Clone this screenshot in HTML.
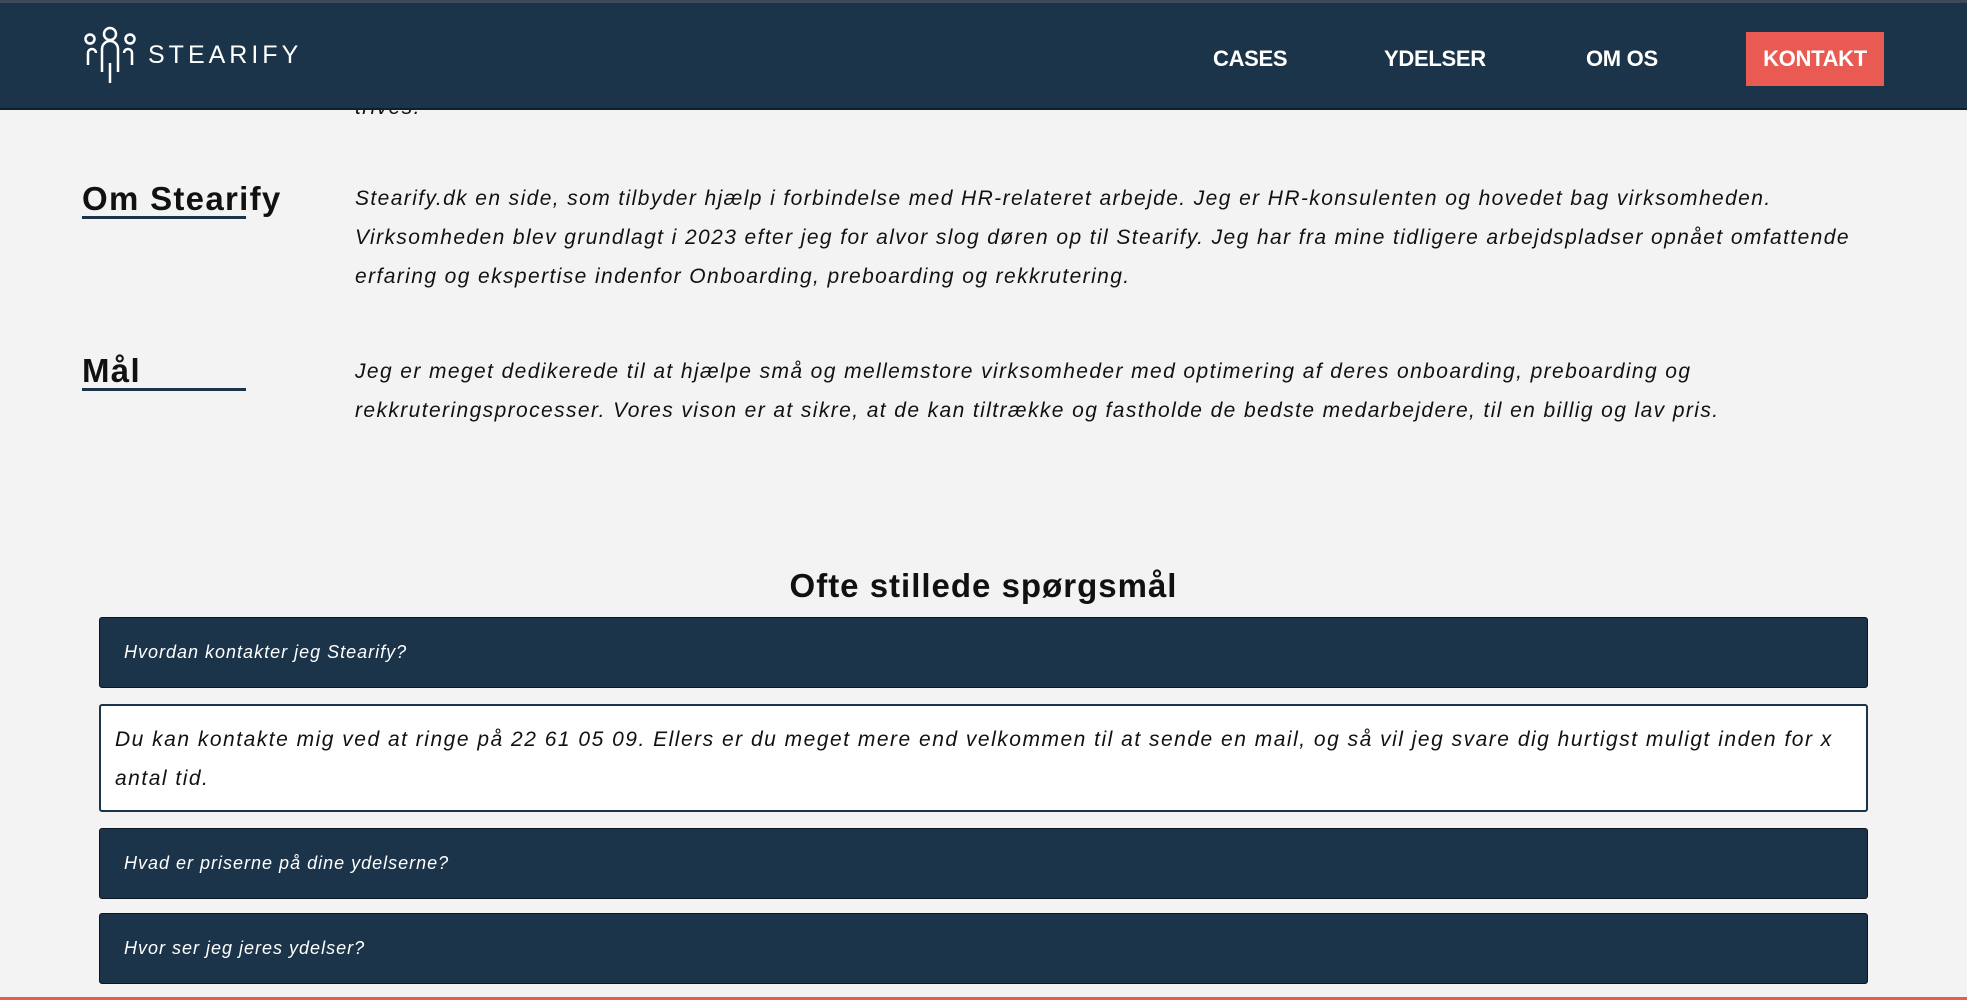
<!DOCTYPE html>
<html><head><meta charset="utf-8"><style>
*{margin:0;padding:0;box-sizing:border-box}
body{width:1967px;height:1000px;background:#f3f3f3;font-family:"Liberation Sans",sans-serif;position:relative;overflow:hidden;color:#111}
.hdr{position:absolute;left:0;top:0;width:1967px;height:110px;background:#1b3449;border-top:3px solid #3d4a5a;border-bottom:2px solid #0e1f2d;z-index:2}
.nav{position:absolute;top:43px;color:#fff;font-weight:bold;font-size:22px;letter-spacing:-0.3px}
.k{position:absolute;left:1746px;top:29px;width:138px;height:54px;background:#e85a52;color:#fff;font-weight:bold;font-size:22px;text-align:center;line-height:54px;letter-spacing:-0.3px}
.logo{position:absolute;left:148px;top:38px;color:#fff;font-size:25px;letter-spacing:4px;font-weight:normal}
.h{position:absolute;left:82px;font-weight:bold;font-size:33px;letter-spacing:1.3px}
.ul{position:absolute;left:82px;width:164px;height:3px;background:#1b3449}
.p{position:absolute;left:355px;font-style:italic;font-size:21px;line-height:39px;width:1600px;letter-spacing:1.4px}
.q{position:absolute;left:99px;width:1769px;height:71px;background:#1b3449;border:1px solid #0b1620;border-radius:3px;color:#fff;font-style:italic;font-size:18px;padding-left:24px;line-height:69px;letter-spacing:1px}
.a{position:absolute;left:99px;top:704px;width:1769px;height:108px;background:#fff;border:2px solid #1b3449;border-radius:3px;font-style:italic;font-size:21px;line-height:39px;padding:14px 14px 0 14px;letter-spacing:1.5px}
</style></head><body>
<div class="p" style="top:88px;left:355px">trives.</div>
<div class="hdr">
<svg style="position:absolute;left:80px;top:22px" width="60" height="60" viewBox="0 0 60 60" fill="none" stroke="#fff" stroke-width="2.5">
<circle cx="10" cy="14" r="4.5"/><circle cx="30" cy="9" r="6"/><circle cx="50" cy="14" r="4.5"/>
<path d="M8 40 V28 a4 4 0 0 1 8 0"/><path d="M52 40 V28 a4 4 0 0 0 -8 0"/>
<path d="M22 47 V24 a8 8 0 0 1 16 0 V47"/><path d="M30 38 V58"/>
</svg>
<div class="logo">STEARIFY</div>
<div class="nav" style="left:1213px">CASES</div>
<div class="nav" style="left:1384px">YDELSER</div>
<div class="nav" style="left:1586px">OM OS</div>
<div class="k">KONTAKT</div>
</div>
<div class="h" style="top:180px">Om Stearify</div>
<div class="ul" style="top:216px"></div>
<div class="p" style="top:179px">Stearify.dk en side, som tilbyder hjælp i forbindelse med HR-relateret arbejde. Jeg er HR-konsulenten og hovedet bag virksomheden.<br>Virksomheden blev grundlagt i 2023 efter jeg for alvor slog døren op til Stearify. Jeg har fra mine tidligere arbejdspladser opnået omfattende<br>erfaring og ekspertise indenfor Onboarding, preboarding og rekkrutering.</div>
<div class="h" style="top:352px">Mål</div>
<div class="ul" style="top:388px"></div>
<div class="p" style="top:352px">Jeg er meget dedikerede til at hjælpe små og mellemstore virksomheder med optimering af deres onboarding, preboarding og<br>rekkruteringsprocesser. Vores vison er at sikre, at de kan tiltrække og fastholde de bedste medarbejdere, til en billig og lav pris.</div>
<div style="position:absolute;left:0;width:1967px;top:567px;text-align:center;font-weight:bold;font-size:33px;letter-spacing:1px">Ofte stillede spørgsmål</div>
<div class="q" style="top:617px">Hvordan kontakter jeg Stearify?</div>
<div class="a">Du kan kontakte mig ved at ringe på 22 61 05 09. Ellers er du meget mere end velkommen til at sende en mail, og så vil jeg svare dig hurtigst muligt inden for x<br>antal tid.</div>
<div class="q" style="top:828px">Hvad er priserne på dine ydelserne?</div>
<div class="q" style="top:913px">Hvor ser jeg jeres ydelser?</div>
<div style="position:absolute;left:0;top:997px;width:1967px;height:3px;background:#e85a52"></div>
</body></html>
